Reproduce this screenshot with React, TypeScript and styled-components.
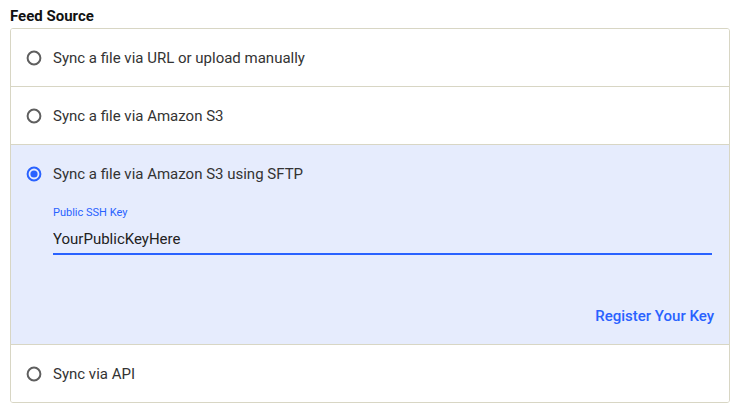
import React, { useState } from "react";
import styled, { createGlobalStyle } from "styled-components";

const Global = createGlobalStyle`
  html, body { margin: 0; padding: 0; background: #fff; }
  body { font-family: Roboto, "Liberation Sans", Arial, sans-serif; color: #333; }
`;

const BLUE = "#2962ff";

const Wrapper = styled.div`
  padding: 6px 10px 0 10px;
`;

const Title = styled.h2`
  margin: 0 0 2px 0;
  font-size: 15px;
  line-height: 20px;
  font-weight: 700;
  color: #111;
`;

const Box = styled.div`
  width: 720px;
  box-sizing: border-box;
  border: 1px solid #d8d6c4;
  border-radius: 3px;
  overflow: hidden;
`;

const Option = styled.div<{ $selected: boolean }>`
  background: ${(p) => (p.$selected ? "#e6ecfd" : "#fff")};
  & + & {
    border-top: 1px solid #d8d6c4;
  }
`;

const OptionHead = styled.label`
  display: flex;
  align-items: center;
  height: 57px;
  padding-left: 13px;
  gap: 9px;
  cursor: pointer;
  font-size: 15px;
  color: #333;
`;

const HiddenInput = styled.input`
  position: absolute;
  opacity: 0;
  width: 0;
  height: 0;
`;

const Body = styled.div`
  padding: 4px 15px 18px 42px;
  display: flex;
  flex-direction: column;
`;

const Field = styled.div`
  display: flex;
  flex-direction: column;
  margin-right: 2px;
`;

const FieldLabel = styled.span`
  font-size: 11px;
  line-height: 14px;
  color: ${BLUE};
`;

const TextInput = styled.input`
  margin-top: 8px;
  height: 22px;
  padding: 0 0 3px 0;
  border: none;
  border-bottom: 2px solid ${BLUE};
  background: transparent;
  font-family: Roboto, "Liberation Sans", Arial, sans-serif;
  font-size: 15px;
  color: #222;
  outline: none;
`;

const LinkButton = styled.button`
  align-self: flex-end;
  margin-top: 51px;
  border: none;
  background: none;
  padding: 0;
  font-family: Roboto, "Liberation Sans", Arial, sans-serif;
  font-size: 15px;
  line-height: 20px;
  font-weight: 500;
  color: ${BLUE};
  cursor: pointer;
`;

const RadioIcon: React.FC<{ checked: boolean }> = ({ checked }) => (
  <svg width="20" height="20" viewBox="0 0 20 20">
    <circle
      cx="10"
      cy="10"
      r="6.4"
      fill="none"
      stroke={checked ? BLUE : "#5f5f5f"}
      strokeWidth="2"
    />
    {checked && <circle cx="10" cy="10" r="3.6" fill={BLUE} />}
  </svg>
);

const options = [
  "Sync a file via URL or upload manually",
  "Sync a file via Amazon S3",
  "Sync a file via Amazon S3 using SFTP",
  "Sync via API",
];

export default function App() {
  const [selected, setSelected] = useState(2);
  const [key, setKey] = useState("YourPublicKeyHere");
  return (
    <Wrapper>
      <Global />
      <Title>Feed Source</Title>
      <Box>
        {options.map((label, i) => (
          <Option key={label} $selected={selected === i}>
            <OptionHead>
              <HiddenInput
                type="radio"
                name="feed"
                checked={selected === i}
                onChange={() => setSelected(i)}
              />
              <RadioIcon checked={selected === i} />
              {label}
            </OptionHead>
            {selected === i && i === 2 && (
              <Body>
                <Field>
                  <FieldLabel>Public SSH Key</FieldLabel>
                  <TextInput value={key} onChange={(e) => setKey(e.target.value)} />
                </Field>
                <LinkButton>Register Your Key</LinkButton>
              </Body>
            )}
          </Option>
        ))}
      </Box>
    </Wrapper>
  );
}
